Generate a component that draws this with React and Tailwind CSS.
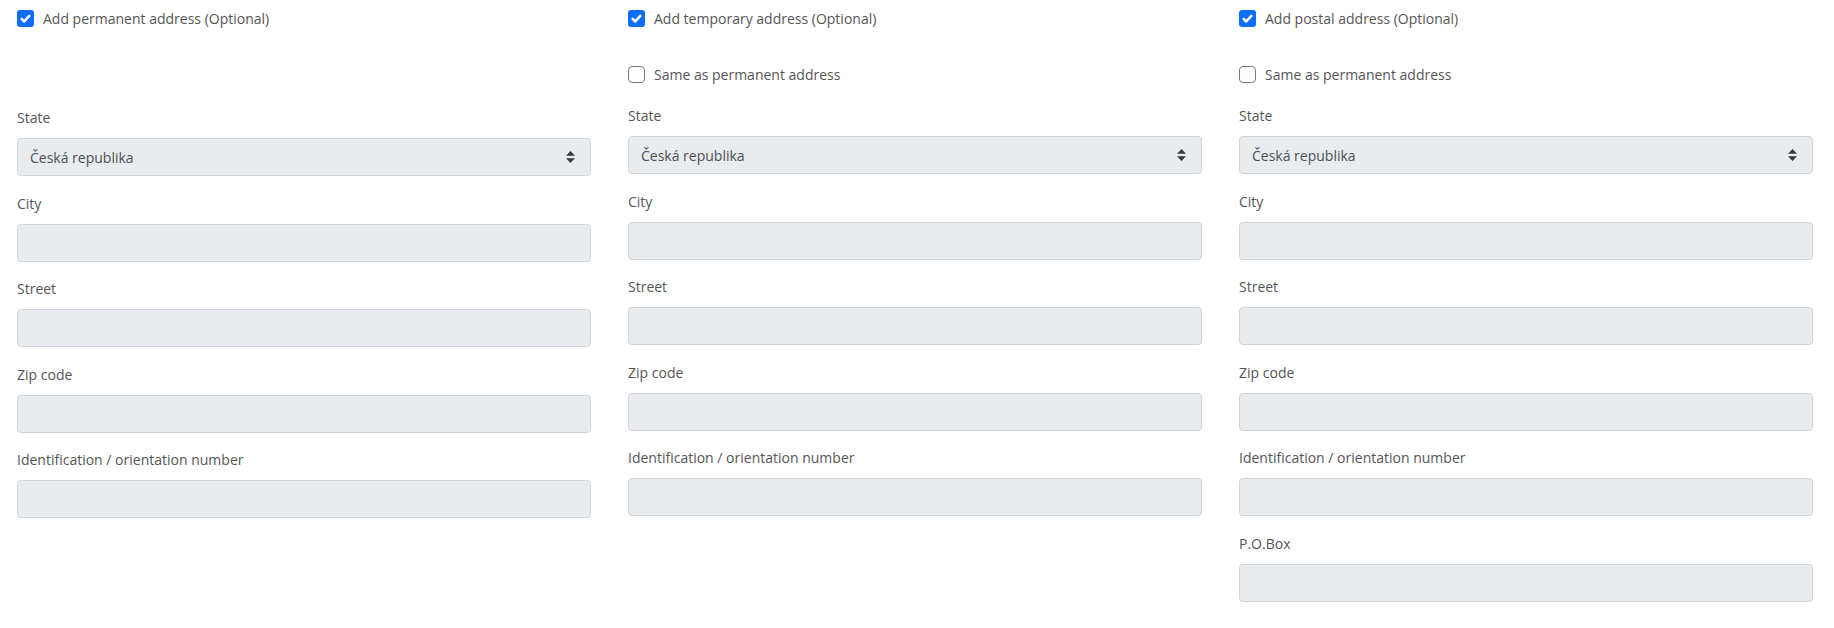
import React from 'react';

const Checkbox = ({ checked, label, className = '' }) => (
  <div className={`flex h-[21px] items-center ${className}`}>
    {checked ? (
      <span className="flex h-[17px] w-[17px] items-center justify-center rounded-[3px] bg-[#0d6efd]">
        <svg viewBox="0 0 20 20" className="h-[17px] w-[17px]">
          <path d="M5.5 10.5l3 3l6-6.5" fill="none" stroke="#fff" strokeWidth="3" strokeLinecap="round" strokeLinejoin="round" />
        </svg>
      </span>
    ) : (
      <span className="h-[17px] w-[17px] rounded-[4px] border border-[#7a7a7a] bg-white" />
    )}
    <span className="ml-[9px] text-[14px] leading-[21px] text-[#555]">{label}</span>
  </div>
);

const Field = ({ label, value, select, last }) => (
  <div className={last ? '' : 'mb-[16.5px]'}>
    <div className="mb-[10px] text-[14px] leading-[21px] text-[#555]">{label}</div>
    <div className="relative flex h-[38px] items-center rounded-[4px] border border-[#ced4da] bg-[#e9ecef] px-3 text-[14px] text-[#495057]">
      {value}
      {select && (
        <svg viewBox="0 0 4 5" className="absolute right-[15px] top-1/2 h-[12px] w-[9px] -translate-y-1/2" preserveAspectRatio="none">
          <path d="M2 0L0 2h4zm0 5L0 3h4z" fill="#343a40" />
        </svg>
      )}
    </div>
  </div>
);

const AddressFields = ({ poBox }) => (
  <div>
    <Field label="State" value="Česká republika" select />
    <Field label="City" />
    <Field label="Street" />
    <Field label="Zip code" />
    <Field label="Identification / orientation number" last={!poBox} />
    {poBox && <Field label="P.O.Box" last />}
  </div>
);

const App = () => {
  return (
    <div className="min-h-[628px] bg-white pl-[17px] pr-[21px] pt-[8px] font-['Open_Sans',sans-serif]">
      <div className="grid grid-cols-3 gap-x-[37px]">
        <div>
          <Checkbox checked label="Add permanent address (Optional)" />
          <div className="h-[78px]" />
          <AddressFields />
        </div>
        <div>
          <Checkbox checked label="Add temporary address (Optional)" />
          <Checkbox label="Same as permanent address" className="mt-[35px]" />
          <div className="h-[20px]" />
          <AddressFields />
        </div>
        <div>
          <Checkbox checked label="Add postal address (Optional)" />
          <Checkbox label="Same as permanent address" className="mt-[35px]" />
          <div className="h-[20px]" />
          <AddressFields poBox />
        </div>
      </div>
    </div>
  );
};

export default App;
